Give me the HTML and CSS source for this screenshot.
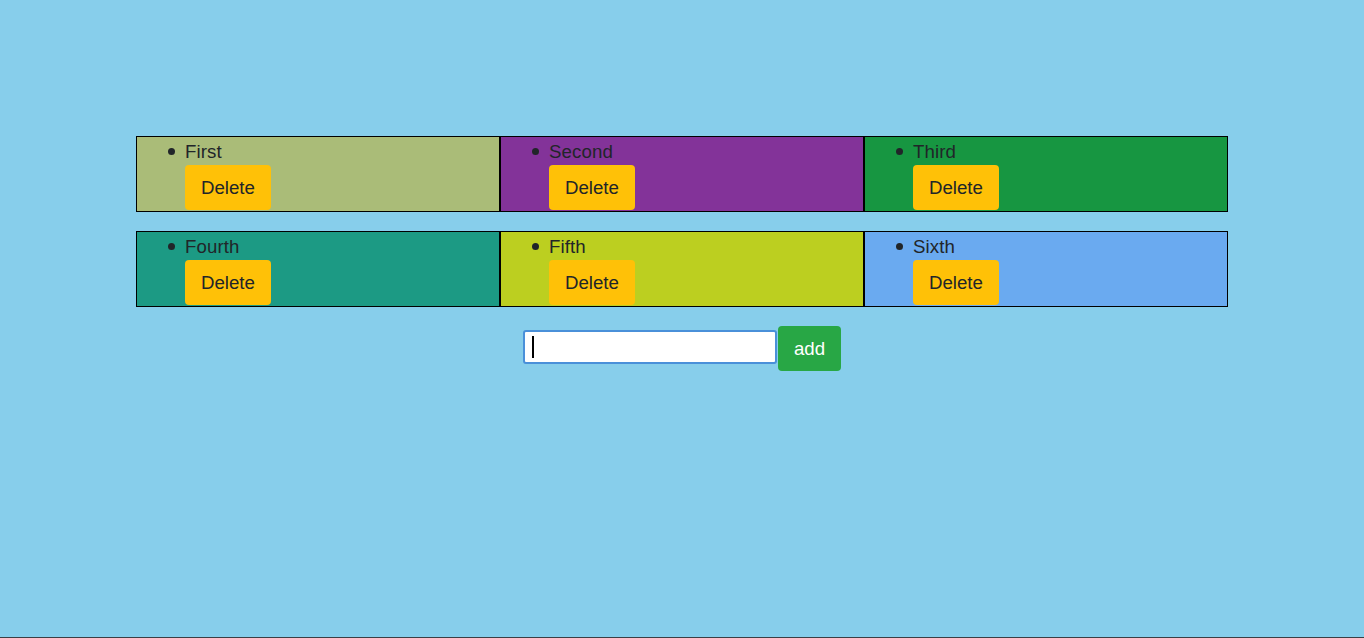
FILE: index.html
```html
<!DOCTYPE html>
<html>
<head>
<meta charset="utf-8">
<link rel="stylesheet" href="styles.css">
</head>
<body>
<main class="page">
  <div class="grid">
    <ul class="card c1"><li class="item"><span class="label">First</span><button class="del">Delete</button></li></ul>
    <ul class="card c2"><li class="item"><span class="label">Second</span><button class="del">Delete</button></li></ul>
    <ul class="card c3"><li class="item"><span class="label">Third</span><button class="del">Delete</button></li></ul>
    <ul class="card c4"><li class="item"><span class="label">Fourth</span><button class="del">Delete</button></li></ul>
    <ul class="card c5"><li class="item"><span class="label">Fifth</span><button class="del">Delete</button></li></ul>
    <ul class="card c6"><li class="item"><span class="label">Sixth</span><button class="del">Delete</button></li></ul>
  </div>
  <form class="adder">
    <div class="field"><input class="text" type="text"><span class="caret"></span></div>
    <button type="button" class="add">add</button>
  </form>
</main>
<div class="bottomline"></div>
</body>
</html>
```
FILE: styles.css
```css
html, body {
  margin: 0;
  padding: 0;
  background: #87ceeb;
  height: 100%;
}
body {
  font-family: "Liberation Sans", Arial, sans-serif;
  font-size: 18.67px;
  color: #212529;
}
.page {
  padding-top: 136px;
}
.grid {
  width: 1092px;
  margin: 0 auto;
  display: grid;
  grid-template-columns: repeat(3, 364px);
  row-gap: 19px;
}
.card {
  margin: 0;
  box-sizing: border-box;
  height: 76px;
  border: 1px solid #000;
  padding: 4px 0 0 48px;
  list-style: none;
}
.item {
  margin: 0;
  position: relative;
}
.item::before {
  content: "";
  position: absolute;
  left: -17px;
  top: 7px;
  width: 7px;
  height: 7px;
  border-radius: 50%;
  background: #212529;
}
.label {
  display: block;
  line-height: 22px;
  letter-spacing: 0.1px;
}
.del {
  display: block;
  margin-top: 2px;
  height: 45px;
  padding: 0 16px;
  border: none;
  border-radius: 4px;
  background: #ffc107;
  color: #212529;
  font-family: inherit;
  font-size: 18.67px;
  line-height: 46px;
}
.c1 { background: #aabc78; }
.c2 { background: #833399; }
.c3 { background: #179641; }
.c4 { background: #1c9a84; }
.c5 { background: #bccf20; }
.c6 { background: #6aaaf0; }
.adder {
  margin: 19px 0 0;
  display: flex;
  justify-content: center;
  align-items: flex-start;
}
.field {
  position: relative;
  margin-top: 4px;
  margin-right: 1px;
}
.text {
  display: block;
  box-sizing: border-box;
  width: 254px;
  height: 34px;
  border: 2px solid #4a90d9;
  border-radius: 3px;
  background: #fff;
  outline: none;
  padding: 0 8px;
  font-family: inherit;
  font-size: 18.67px;
}
.caret {
  position: absolute;
  left: 9px;
  top: 6px;
  width: 2px;
  height: 22px;
  background: #000;
}
.add {
  height: 45px;
  padding: 0 16px;
  border: none;
  border-radius: 4px;
  background: #28a745;
  color: #fff;
  font-family: inherit;
  font-size: 18.67px;
  line-height: 45px;
}
.bottomline {
  position: fixed;
  left: 0;
  right: 0;
  bottom: 0;
  height: 1px;
  background: #3a3f44;
}
```
